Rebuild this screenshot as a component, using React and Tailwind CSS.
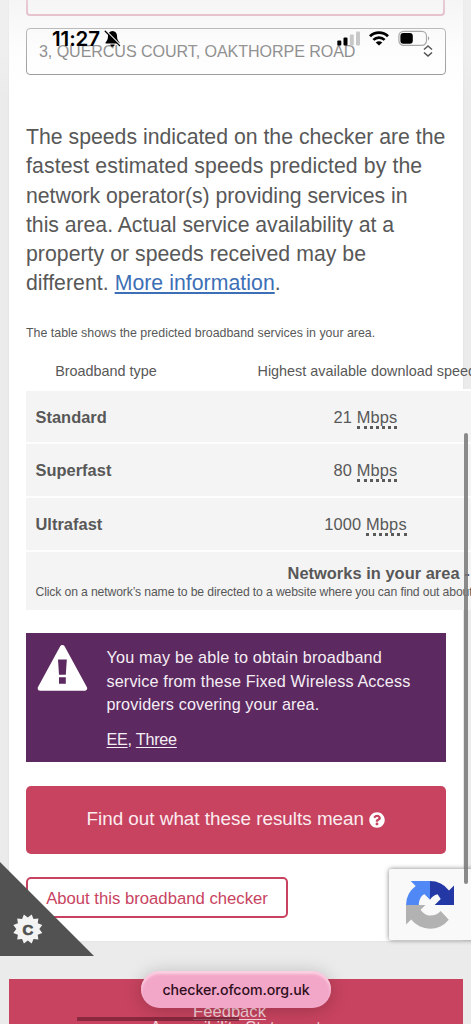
import React from 'react';
import { FaQuestionCircle } from 'react-icons/fa';

const speeds = [
    { type: 'Standard', speed: '21' },
    { type: 'Superfast', speed: '80' },
    { type: 'Ultrafast', speed: '1000' }
];

const StatusBar = () => (
    <div className="absolute inset-x-0 top-0 h-[100px] pointer-events-none">
        <div className="absolute inset-0 bg-gradient-to-b from-[#f0f0f0]/65 via-[#f8f8f8]/30 to-white/0" />
        <div className="relative flex items-start pl-[52px] pr-[40px] pt-[27.5px] text-black">
            <span className="w-[48px] whitespace-nowrap font-['Inter'] text-[20.5px] leading-[22px] font-semibold tracking-[-0.1px]">11:27</span>
            {/* Silent mode */}
            <svg className="ml-[4px] mt-[2px]" width="17" height="18" viewBox="0 0 17 18">
                <path d="M8.5 1C5.6 1 4 3.2 4 6C4 9.5 2.8 10.8 1.7 12.2C1.2 13 1.5 13.6 2.4 13.6H14.6C15.5 13.6 15.8 13 15.3 12.2C14.2 10.8 13 9.5 13 6C13 3.2 11.4 1 8.5 1Z M6.3 14.5H10.7C10.5 16 9.6 16.7 8.5 16.7S6.5 16 6.3 14.5Z" fill="#000" />
                <path d="M2.2 1L16.2 15" stroke="#f6f6f6" strokeWidth="1.6" />
                <path d="M1.2 1.2L15.6 15.6" stroke="#000" strokeWidth="1.3" strokeLinecap="round" />
            </svg>
            <div className="flex-1" />
            {/* Signal strength */}
            <svg className="mt-[3.5px]" width="24" height="15" viewBox="0 0 24 15">
                <rect x="0.3" y="9.5" width="4" height="5" rx="1" fill="#000" />
                <rect x="6.5" y="6.5" width="4" height="8" rx="1" fill="#000" />
                <rect x="12.8" y="3.4" width="4" height="11.2" rx="1" fill="#c8c8c8" />
                <rect x="19" y="0.4" width="4" height="14.2" rx="1" fill="#c8c8c8" />
            </svg>
            <svg className="ml-[8px] mt-[3.5px]" width="20" height="15" viewBox="0 0 20 15" fill="none" stroke="#000">
                <path d="M1 5.2C6 0.3 14 0.3 19 5.2" strokeWidth="2.8" />
                <path d="M4.4 8.9C7.5 5.8 12.5 5.8 15.6 8.9" strokeWidth="2.7" />
                <path d="M10 14.6L6.7 11.4C8.7 9.7 11.3 9.7 13.3 11.4Z" fill="#000" stroke="none" />
            </svg>
            <svg className="ml-[9px] mt-[2.5px]" width="33" height="17" viewBox="0 0 33 17">
                <rect x="0.9" y="1.3" width="27.6" height="14" rx="4.6" fill="none" stroke="#a9a9a9" strokeWidth="1.2" />
                <rect x="2.4" y="3" width="12.4" height="10.8" rx="3" fill="#000" />
                <path d="M30 6.2C31.6 6.8 31.6 9.8 30 10.4Z" fill="#a0a0a0" />
            </svg>
        </div>
    </div>
);

const SpeedTable = () => (
    <div className="w-[640px] mt-[19px]">
        <div className="flex h-[28px] text-[14.4px] leading-[20px]">
            <div className="w-[160px] text-center">Broadband type</div>
            <div className="ml-[71.5px] whitespace-nowrap">Highest available download speed</div>
        </div>
        <div className="border-t-2 border-white">
            {speeds.map((row) => (
                <div key={row.type} className="flex h-[53.6px] items-center border-b-2 border-[#fdfdfd] bg-[#f4f4f4] text-[16.4px] leading-[20px]">
                    <div className="w-[160px] pl-[9.5px] font-bold tracking-[0.03px]">{row.type}</div>
                    <div className="w-[359px] text-center tracking-[0.15px]">
                        {row.speed} <span className="border-b-[3px] border-dotted border-[#5a5a5a]">Mbps</span>
                    </div>
                </div>
            ))}
            <div className="h-[58px] bg-[#f4f4f4] pt-[11px] pl-[9.5px] whitespace-nowrap">
                <div className="pl-[252px] text-[16.4px] leading-[20px] font-bold tracking-[0.04px]">Networks in your area - fixed</div>
                <div className="text-[12.2px] leading-[18px] tracking-[-0.13px]">
                    Click on a network’s name to be directed to a website where you can find out about
                </div>
            </div>
        </div>
    </div>
);

const FixedWirelessNotice = () => (
    <div className="mt-[23.5px] flex h-[129px] bg-[#5c2960] pt-[11px] text-[16.2px] leading-[23.6px] text-[#f5eef5]">
        <svg className="ml-[11px]" width="51" height="48" viewBox="0 0 51 48">
            <path d="M25.4 3.5L47.6 44.2H3.2Z" fill="#fff" stroke="#fff" strokeWidth="5" strokeLinejoin="round" />
            <path d="M21 15.5H29.8L28.8 30.7H22Z M22 33.2H28.8V39.8H22Z" fill="#5c2960" />
        </svg>
        <div className="ml-[18.5px] pt-[2px]">
            <p className="whitespace-nowrap">
                <span className="tracking-[0.2px]">You may be able to obtain broadband</span><br />
                <span className="tracking-[0.13px]">service from these Fixed Wireless Access</span><br />
                <span className="tracking-[0.11px]">providers covering your area.</span>
            </p>
            <p className="mt-[11.5px] tracking-[-0.25px]">
                <a className="underline underline-offset-2">EE</a>, <a className="underline underline-offset-2">Three</a>
            </p>
        </div>
    </div>
);

const CookieControl = () => (
    <div className="absolute left-0 top-[862px] h-[94px] w-[94px]">
        <svg width="94" height="94" viewBox="0 0 94 94">
            <path d="M0 0L94 94H0Z" fill="#525252" />
            <path
                d="M27.8 55.5L31.7 52.5L33.5 57.1L38.4 56.4L37.7 61.3L42.3 63.1L39.3 67L42.3 70.9L37.7 72.7L38.4 77.6L33.5 76.9L31.7 81.5L27.8 78.5L23.9 81.5L22.1 76.9L17.2 77.6L17.9 72.7L13.3 70.9L16.3 67L13.3 63.1L17.9 61.3L17.2 56.4L22.1 57.1L23.9 52.5Z"
                fill="#f3f3f3"
            />
        </svg>
        <span className="absolute left-[20px] top-[57.5px] w-[16px] text-center text-[15px] leading-[20px] font-bold text-[#525252] [-webkit-text-stroke:0.7px_#525252]">C</span>
    </div>
);

const RecaptchaBadge = () => (
    <div className="absolute left-[389px] top-[869px] flex h-[71px] w-[90px] items-start rounded-[2px] bg-[#f9f9f9] pl-[17px] pt-[12px] shadow-[0_0_5px_#808080]">
        <svg width="48" height="48" viewBox="0 0 48 48">
            <path d="M24 0A24 24 0 0 1 43 9.5L48 4.5V24H28.7L34.7 18L31.6 13.2Q26.6 14.2 24 18.7Z" fill="#2338a4" />
            <path d="M24 0V18.7L18.2 13C15 15.2 13 18.5 12.8 24H0A24 24 0 0 1 9.7 5L4.7 0Z" fill="#5089f5" />
            <path d="M0 24H19.5L14.6 28.8C17 32 19.8 34.6 24 34.6C28.5 34.6 32 33 34.7 30L42.8 38.8A24 24 0 0 1 5.2 38.6L0 43.6Z" fill="#b2b2b2" />
        </svg>
    </div>
);

const App = () => {
    return (
        <div className="relative h-[1024px] w-[471px] overflow-hidden bg-[#ebebeb] font-['Liberation_Sans',sans-serif] text-[#585858]">
            <main className="mx-[8.5px] h-[941px] bg-white pl-[17.5px] pr-[17px] shadow-[0_0_2px_#dddddd]">
                <div className="h-[15.5px] w-[419px] rounded-b-[4px] border-2 border-t-0 border-[#d98ba1]" />
                <div className="mt-[12.5px] flex h-[46.5px] w-[419.5px] items-center justify-between rounded-[4px] border border-[#8c8c8c] pl-[12px] pr-[12px] text-[#666666]">
                    <span className="whitespace-nowrap text-[16.1px] tracking-[-0.08px]">3, QUERCUS COURT, OAKTHORPE ROAD</span>
                    <svg width="10" height="12" viewBox="0 0 10 12" fill="none" stroke="#111" strokeWidth="1.5">
                        <path d="M1 4.5L5 1L9 4.5M1 7.5L5 11L9 7.5" />
                    </svg>
                </div>

                <p className="mt-[48.5px] whitespace-nowrap text-[21.25px] leading-[29.3px]">
                    The speeds indicated on the checker are the<br />
                    <span className="tracking-[0.1px]">fastest estimated speeds predicted by the</span><br />
                    <span className="tracking-[-0.03px]">network operator(s) providing services in</span><br />
                    <span className="tracking-[-0.04px]">this area. Actual service availability at a</span><br />
                    <span className="tracking-[0.03px]">property or speeds received may be</span><br />
                    <span className="tracking-[0.04px]">
                        different. <a className="text-[#3d6fb6] underline underline-offset-2">More information</a>.
                    </span>
                </p>

                <p className="mt-[25px] whitespace-nowrap text-[12.4px] leading-[18px]">
                    The table shows the predicted broadband services in your area.
                </p>

                <SpeedTable />
                <FixedWirelessNotice />

                <button className="mt-[23.5px] flex h-[68px] w-[419.5px] items-center justify-center gap-[5px] rounded-[5px] bg-[#c8435f] text-[18.85px] text-[#fbecf0]">
                    Find out what these results mean
                    <FaQuestionCircle className="h-4 w-4 text-white" />
                </button>
                <button className="mt-[23.5px] h-[41px] w-[262px] whitespace-nowrap rounded-[5px] border-2 border-[#c8435f] pt-[2px] text-[16.7px] text-[#c8435f]">
                    About this broadband checker
                </button>
            </main>

            <footer className="mx-[8.5px] mt-[38px] h-[60px] bg-[#c8435f] pt-[23px] text-center text-[16.6px] leading-[20px] text-[#f3d3db]">
                <div className="h-[16px] pr-[12px]"><a className="underline underline-offset-2">Feedback</a></div>
                <div><a className="underline underline-offset-2">Accessibility Statement</a></div>
            </footer>

            <StatusBar />
            <CookieControl />
            <RecaptchaBadge />

            {/* Scroll indicator */}
            <div className="absolute left-[464px] top-[433px] h-[451px] w-[3.5px] rounded-full bg-[#777777]/85" />
            {/* Home indicator */}
            <div className="absolute left-[77px] top-[1017px] h-[3.5px] w-[162px] bg-[#6d1c30]/70" />
            <div className="absolute left-[141px] top-[971px] flex h-[37px] w-[190px] items-center justify-center rounded-full bg-[#f2a6c8] font-['Inter'] text-[14.2px] font-medium tracking-[-0.08px] text-[#2e0e1c] shadow-[0_2px_18px_rgba(0,0,0,0.22),inset_0_3px_3px_#fbd3e4]">
                checker.ofcom.org.uk
            </div>
        </div>
    );
};

export default App;
